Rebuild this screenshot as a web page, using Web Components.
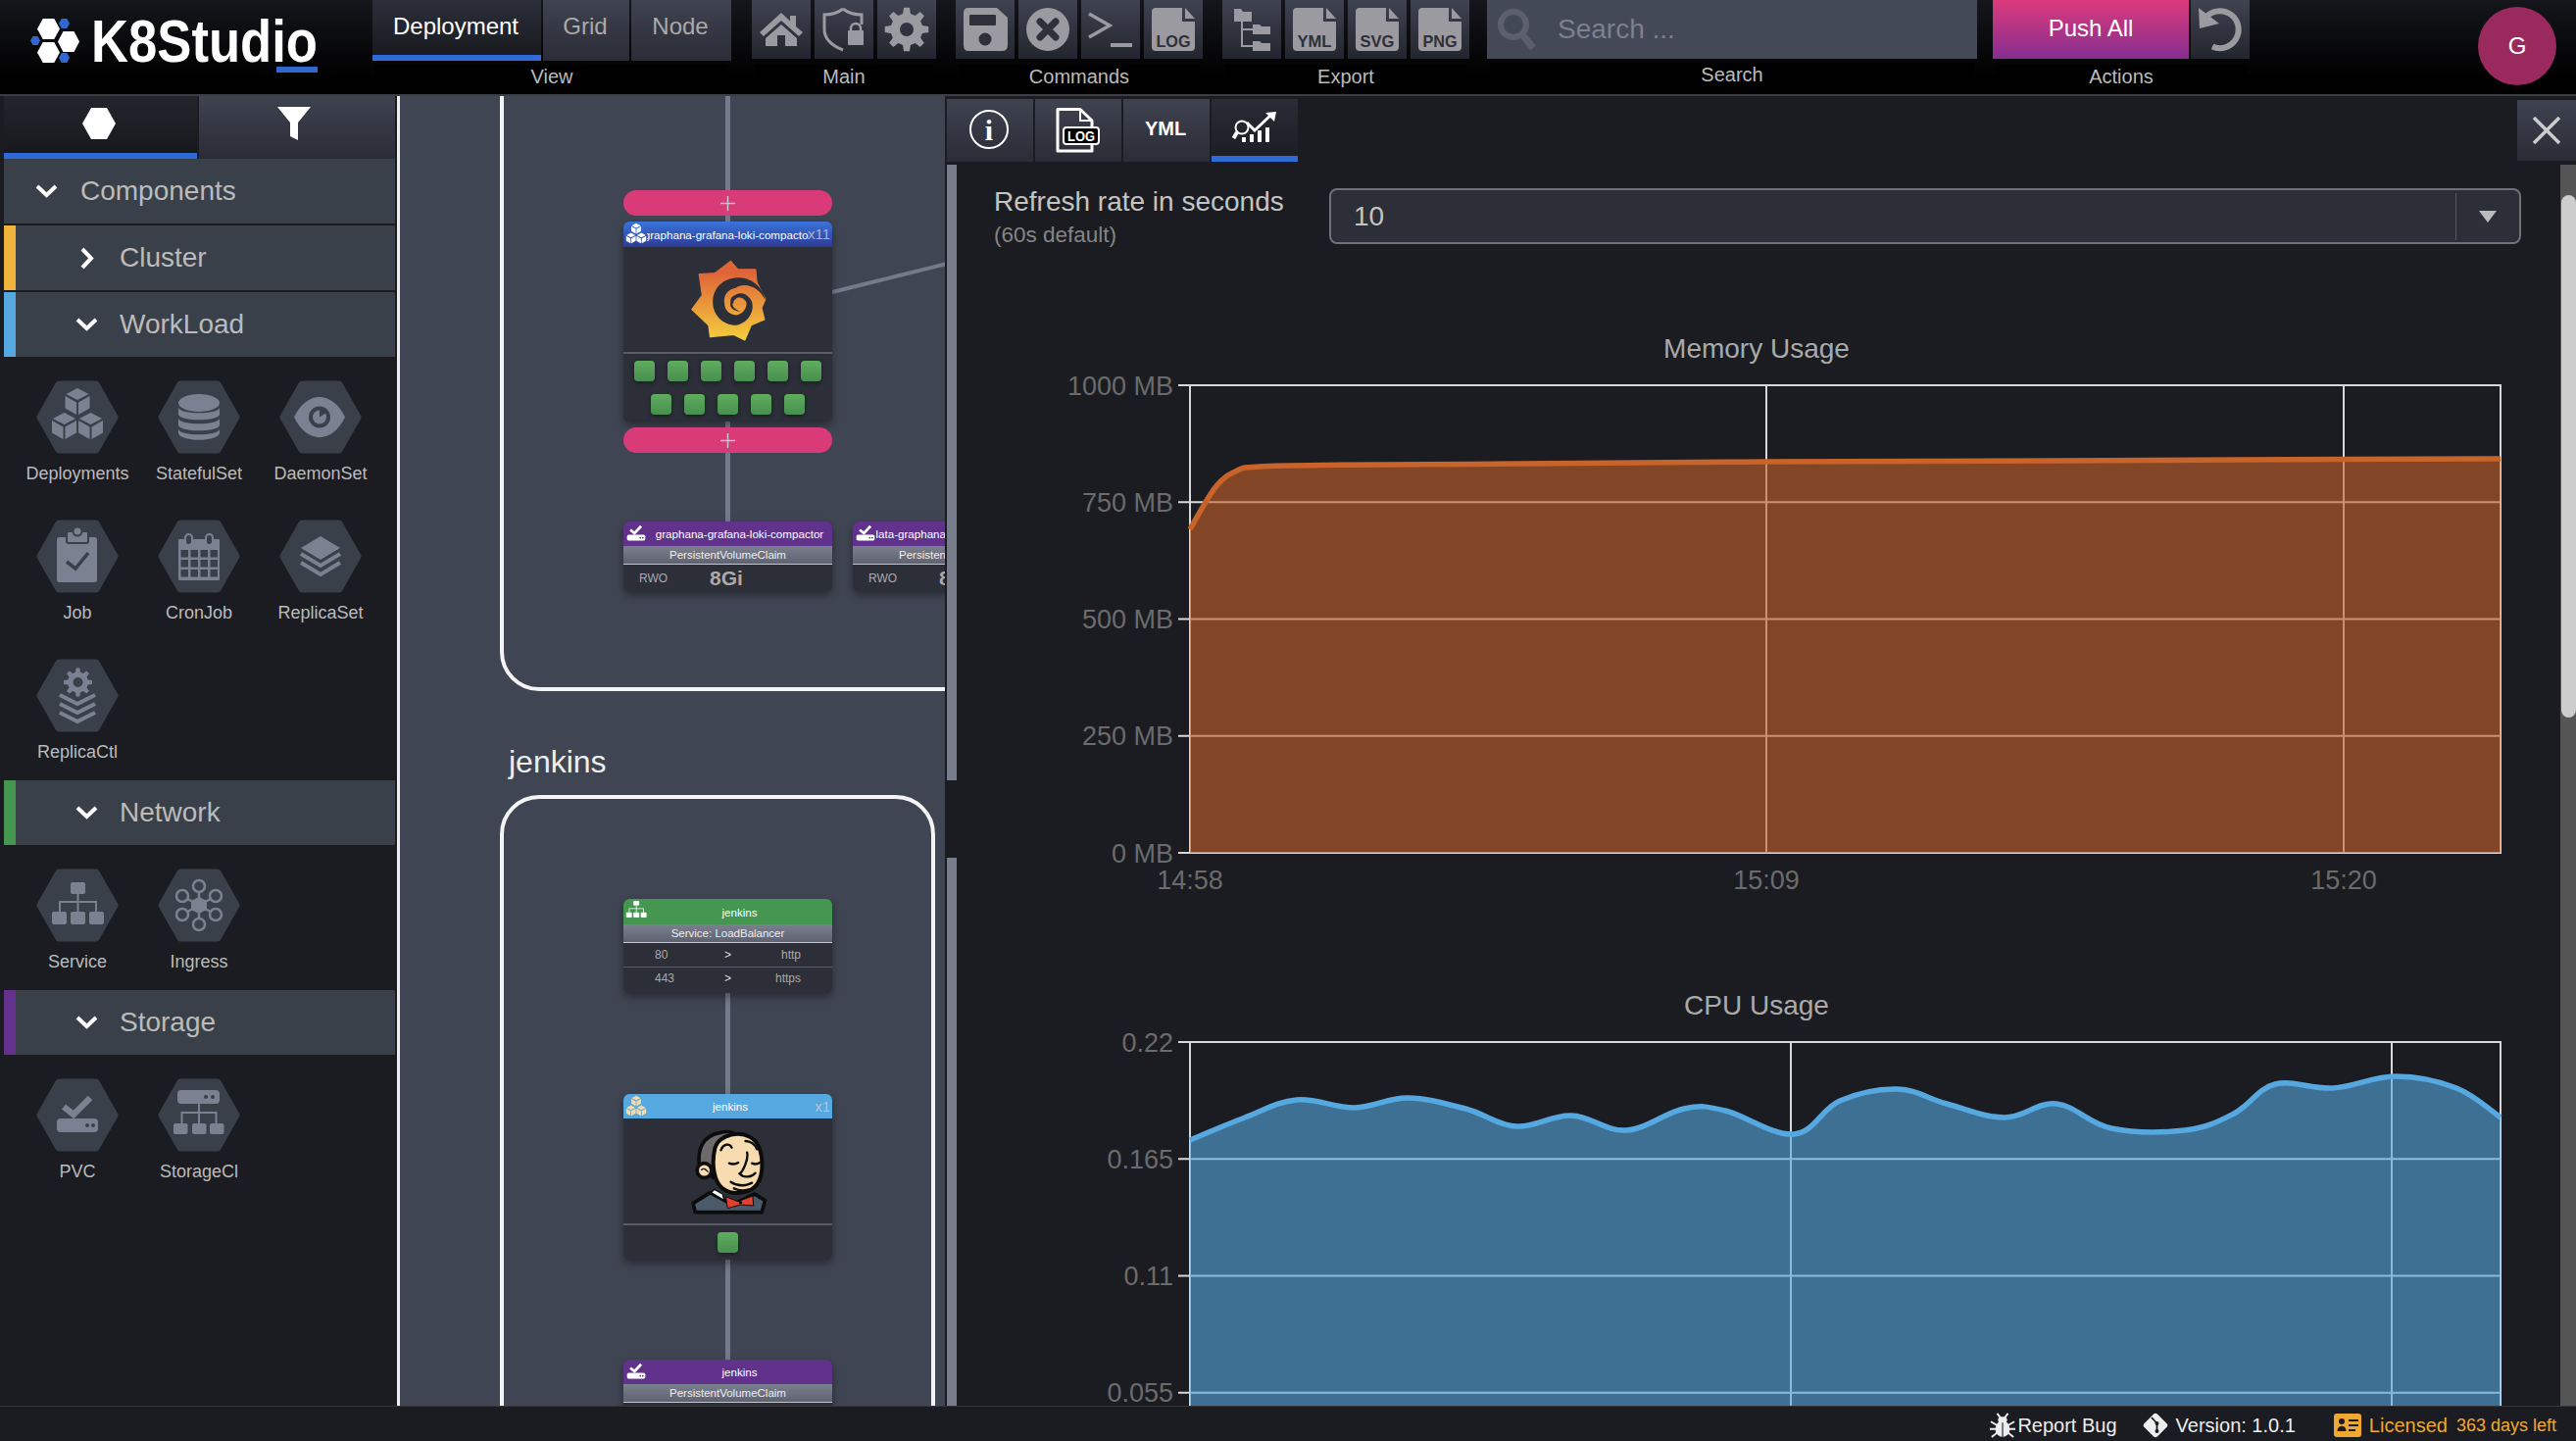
<!DOCTYPE html>
<html lang="en"><head><meta charset="utf-8"><title>K8Studio</title>
<style>
html,body{margin:0;padding:0;width:2628px;height:1470px;overflow:hidden;background:#0c0d10;font-family:"Liberation Sans",Arial,sans-serif}
body{display:flex;flex-direction:column}
</style></head>
<body>
<k8-topbar>
  <k8-logo></k8-logo>
  <k8-group label="View" gap="2" ml="0">
    <k8-tab w="172" active>Deployment</k8-tab><k8-tab w="88">Grid</k8-tab><k8-tab w="102">Node</k8-tab>
  </k8-group>
  <k8-group label="Main" ml="21">
    <k8-tbtn icon="home"></k8-tbtn><k8-tbtn icon="shield"></k8-tbtn><k8-tbtn icon="gear"></k8-tbtn>
  </k8-group>
  <k8-group label="Commands" ml="20">
    <k8-tbtn icon="save"></k8-tbtn><k8-tbtn icon="cancel"></k8-tbtn><k8-tbtn icon="term"></k8-tbtn><k8-tbtn icon="log"></k8-tbtn>
  </k8-group>
  <k8-group label="Export" ml="20">
    <k8-tbtn icon="tree"></k8-tbtn><k8-tbtn icon="yml"></k8-tbtn><k8-tbtn icon="svg"></k8-tbtn><k8-tbtn icon="png"></k8-tbtn>
  </k8-group>
  <k8-group label="Search" ml="18" lt="4"><k8-search></k8-search></k8-group>
  <k8-group label="Actions" ml="16"><k8-push>Push All</k8-push><k8-tbtn icon="undo" w="60" flat></k8-tbtn></k8-group>
  <k8-avatar>G</k8-avatar>
</k8-topbar>
<k8-workspace>
  <k8-sidebar>
    <k8-section title="Components" open top></k8-section>
    <k8-section title="Cluster" color="#f0b43c"></k8-section>
    <k8-section title="WorkLoad" color="#56a8e0" open>
      <k8-tile icon="deploy">Deployments</k8-tile><k8-tile icon="db">StatefulSet</k8-tile><k8-tile icon="eye">DaemonSet</k8-tile>
      <k8-tile icon="job">Job</k8-tile><k8-tile icon="cal">CronJob</k8-tile><k8-tile icon="stack">ReplicaSet</k8-tile>
      <k8-tile icon="rctl">ReplicaCtl</k8-tile>
    </k8-section>
    <k8-section title="Network" color="#459650" open>
      <k8-tile icon="svc">Service</k8-tile><k8-tile icon="ing">Ingress</k8-tile>
    </k8-section>
    <k8-section title="Storage" color="#64318c" open>
      <k8-tile icon="pvc">PVC</k8-tile><k8-tile icon="scl">StorageCl</k8-tile>
    </k8-section>
  </k8-sidebar>
  <k8-canvas>
    <k8-frame y="-100" b="705"></k8-frame>
    <k8-frame y="811" b="1700" r="954" label="jenkins"></k8-frame>
    <k8-wire y="96" b="194"></k8-wire><k8-wire y="220" b="226"></k8-wire><k8-wire y="430" b="436"></k8-wire>
    <k8-wire y="462" b="532"></k8-wire><k8-wire y="1013" b="1116"></k8-wire><k8-wire y="1285" b="1387"></k8-wire>
    <k8-link></k8-link>
    <k8-node x="636" y="40" sub-hidden></k8-node>
    <k8-pill y="194"></k8-pill>
    <k8-node x="636" y="226" hh="26" head="linear-gradient(#3a74dc,#2d3a94)" title="graphana-grafana-loki-compactor" icon="deploy" count="x11" rt="24">
      <k8-art name="grafana"></k8-art><k8-pods n="11"></k8-pods>
    </k8-node>
    <k8-pill y="436"></k8-pill>
    <k8-node x="636" y="532" hh="25" head="#60328c" title="graphana-grafana-loki-compactor" icon="pvc" sub="PersistentVolumeClaim"><k8-claim size="8Gi"></k8-claim></k8-node>
    <k8-node x="870" y="532" hh="25" head="#60328c" title="data-graphana-grafana-loki-compactor" icon="pvc" sub="PersistentVolumeClaim"><k8-claim size="8Gi"></k8-claim></k8-node>
    <k8-node x="636" y="917" hh="26" head="#459650" title="jenkins" icon="svc" sub="Service: LoadBalancer">
      <k8-port from="80" to="http"></k8-port><k8-port from="443" to="https" line></k8-port>
    </k8-node>
    <k8-node x="636" y="1116" hh="25" head="#56a8e0" title="jenkins" icon="deploy" tint="#f5d9a8" count="x1" rt="19">
      <k8-art name="jenkins"></k8-art><k8-pods n="1"></k8-pods>
    </k8-node>
    <k8-node x="636" y="1387" hh="25" head="#60328c" title="jenkins" icon="pvc" sub="PersistentVolumeClaim"><k8-claim size="8Gi"></k8-claim></k8-node>
  </k8-canvas>
  <k8-panel>
    <k8-field label="Refresh rate in seconds" hint="(60s default)" value="10"></k8-field>
    <k8-chart title="Memory Usage" color="#c8632a"
      labels="1000 MB|750 MB|500 MB|250 MB|0 MB" xlabels="14:58@1214|15:09@1802|15:20@2391" vlines="1802,2391"
      points="1214,540 1240,497 1262,480 1285,476 1350,474.5 1500,473.5 1802,471 2100,470 2391,468.5 2551,468"></k8-chart>
    <k8-chart title="CPU Usage" color="#56a8e0" offset="670"
      labels="0.22|0.165|0.11|0.055|" xlabels="" vlines="1827,2440"
      points="1214,1163 1270,1140 1323,1122 1382,1130 1436,1120 1495,1131 1547,1149 1603,1138 1659,1153 1718,1131 1760,1133 1830,1157 1877,1123 1936,1111 1986,1126 2045,1140 2098,1126 2154,1151 2229,1153 2279,1136 2321,1106 2380,1110 2444,1098 2506,1110 2551,1140"></k8-chart>
  </k8-panel>
</k8-workspace>
<k8-footer></k8-footer>

<script>
const HEX='#39404a', CUT='#2e303a';
function cube(cx,y,s){
  const P=(pts)=>`<polygon points="${pts.map(([a,b])=>(cx+a*s).toFixed(1)+','+(y+b*s).toFixed(1)).join(' ')}"/>`;
  return P([[0,0],[.46,.24],[0,.48],[-.46,.24]])+P([[-.5,.32],[-.04,.58],[-.04,1.08],[-.5,.82]])+P([[.5,.32],[.04,.58],[.04,1.08],[.5,.82]]);
}
function gear(cx,cy,R,r,n,h){
  let d='',st=Math.PI*2/n;
  for(let i=0;i<n;i++){const a=i*st-Math.PI/2;
    [[-.3,r],[-.17,R],[.17,R],[.3,r]].forEach(([k,q],j)=>{const x=cx+q*Math.cos(a+k*st),y=cy+q*Math.sin(a+k*st);d+=(i==0&&j==0?'M':'L')+x.toFixed(1)+' '+y.toFixed(1)});}
  d+=`Z M${cx-h} ${cy}a${h} ${h} 0 1 0 ${2*h} 0a${h} ${h} 0 1 0 ${-2*h} 0Z`;
  return `<path fill-rule="evenodd" d="${d}"/>`;
}
function doc(label){
  return `<path d="M8 12Q8 8 12 8H39V22H52V48Q52 52 48 52H12Q8 52 8 48Z"/><path d="M42 8L52 19H42Z"/>
  <text x="30" y="47.5" text-anchor="middle" textLength="35" lengthAdjust="spacingAndGlyphs" font-family="Liberation Sans" font-weight="700" font-size="17" fill="${CUT}">${label}</text>`;
}
function spiral(){
  const T=[[0,95,0],[.13,62,32],[.27,53,37],[.41,56,32],[.54,44,18],[.68,16,14],[.81,10,10],[.95,22,6],[1,33,0]];
  const at=(t,i)=>{for(let k=1;k<T.length;k++)if(t<=T[k][0]){const f=(t-T[k-1][0])/(T[k][0]-T[k-1][0]);return T[k-1][i]+(T[k][i]-T[k-1][i])*f}return T[T.length-1][i]};
  const out=[],inn=[];
  for(let s=0;s<=120;s++){const t=s/120,a=(-4-659*t)*Math.PI/180,rc=at(t,1),w=at(t,2)/2;
    out.push([450+(rc+w)*Math.cos(a),408+(rc+w)*Math.sin(a)]);inn.push([450+(rc-w)*Math.cos(a),408+(rc-w)*Math.sin(a)]);}
  return out.concat(inn.reverse()).map(p=>p[0].toFixed(1)+','+p[1].toFixed(1)).join(' ');
}
const chev=(y)=>`<polyline points="24,${y} 42,${y+9} 60,${y}" fill="none" stroke="currentColor" stroke-width="4"/>`;
const bars=(ys,x=[16,35,54],w=15,h=13)=>x.map(a=>`<rect x="${a}" y="${ys}" width="${w}" height="${h}" rx="2"/>`).join('');
const ICONS={
 deploy:['14 6 56 56',cube(42,8,25)+cube(28.5,33,25)+cube(55.5,33,25)],
 pvc:['16 14 52 44',`<polyline points="28,29 38,37 54,20" fill="none" stroke="currentColor" stroke-width="6.5"/><rect x="20" y="41" width="44" height="14" rx="4"/><circle cx="52" cy="48" r="2" fill="var(--cut,${HEX})"/><circle cx="58" cy="48" r="2" fill="var(--cut,${HEX})"/>`],
 svc:['14 12 56 47',`<rect x="35" y="14" width="15" height="12" rx="2"/><path d="M41.5 26h2v7h18.500v11h-2v-9h-16.500v9h-2v-9h-16.500v9h-2v-11h18.500z"/>`+bars(44)],
 home:['0 0 60 60',`<path d="M30 13L8 33l4 4 18-16 18 16 4-4-7-6V16h-6v5.500z"/><path d="M14 39l16-14 16 14v8H34V36h-8v11H14z"/>`],
 shield:['0 0 60 60',`<path d="M29 9c-5 4-13 6-19 6v15c0 10 9 17 19 21M29 9c5 4 13 6 19 6v10" fill="none" stroke="currentColor" stroke-width="3"/><rect x="34" y="31" width="16" height="15" rx="1"/><path d="M37 31v-2a5 5 0 0 1 10 0v2" fill="none" stroke="currentColor" stroke-width="2.500"/>`],
 gear:['0 0 60 60',gear(30,30,22.500,16.500,8,7)],
 save:['0 0 60 60',`<path d="M13 8H42L53 18V46Q53 52 47 52H13Q8 52 8 46V13Q8 8 13 8Z"/><rect x="14" y="15" width="27" height="11" rx="1" fill="${CUT}"/><circle cx="30" cy="40" r="6.500" fill="${CUT}"/>`],
 cancel:['0 0 60 60',`<circle cx="30" cy="30" r="22"/><path d="M22 22L38 38M38 22L22 38" stroke="${CUT}" stroke-width="7" stroke-linecap="round"/>`],
 term:['0 0 60 60',`<polyline points="8,14 29,26 8,38" fill="none" stroke="currentColor" stroke-width="3.500"/><rect x="30" y="44" width="22" height="4"/>`],
 log:['0 0 60 60',doc('LOG')],yml:['0 0 60 60',doc('YML')],svg:['0 0 60 60',doc('SVG')],png:['0 0 60 60',doc('PNG')],
 tree:['0 0 60 60',`<path d="M12 9h7l2 3h9v10H12zM31 25h7l2 2h9v8H31zM31 42h7l2 2h9v8H31z"/><path d="M20 22v25h11M20 30h11" fill="none" stroke="currentColor" stroke-width="2"/>`],
 undo:['0 0 60 60',`<path d="M17 16A19 19 0 1 1 22 47.500" fill="none" stroke="currentColor" stroke-width="6"/><path d="M8 8L9 29L29 24Z"/>`],
 search:['0 0 60 60',`<circle cx="27" cy="25" r="13" fill="none" stroke="currentColor" stroke-width="6"/><path d="M36 35L47 49" stroke="currentColor" stroke-width="7"/>`],
 hexa:['0 0 34 32','<polygon points="0,16 9,0 25,0 34,16 25,32 9,32"/>'],
 funnel:['0 0 34 34','<polygon points="0,0 34,0 21,16 21,34 13,30 13,16"/>'],
 chevd:['0 0 23 14','<polyline points="2,2 11.500,11 21,2" fill="none" stroke="currentColor" stroke-width="4"/>'],
 chevr:['0 0 14 23','<polyline points="2,2 11,11.500 2,21" fill="none" stroke="currentColor" stroke-width="4"/>'],
 info:['0 0 44 44',`<circle cx="22" cy="22" r="19" fill="none" stroke="currentColor" stroke-width="2"/><text x="22" y="33" text-anchor="middle" font-family="Liberation Serif" font-size="30">i</text>`],
 logtab:['0 0 46 48',`<path d="M3 3.500H26L38 15V46H3z" fill="none" stroke="currentColor" stroke-width="3" stroke-linejoin="round"/><path d="M26 3V15H38" fill="none" stroke="currentColor" stroke-width="2"/><rect x="9" y="22" width="36" height="17" rx="3" fill="#000" stroke="#fff" stroke-width="2"/><text x="27" y="35.500" text-anchor="middle" textLength="28" lengthAdjust="spacingAndGlyphs" font-family="Liberation Sans" font-weight="700" font-size="14">LOG</text>`],
 chart:['0 0 46 32',`<circle cx="10" cy="16" r="6.500" fill="none" stroke="currentColor" stroke-width="2"/><path d="M5 21L1.500 27" stroke="currentColor" stroke-width="4"/><rect x="10" y="26" width="4" height="5"/><rect x="18" y="23" width="4" height="8"/><rect x="26" y="19" width="4" height="12"/><rect x="34" y="16" width="4" height="15"/><polyline points="15,11 23,19 40,3" fill="none" stroke="currentColor" stroke-width="3"/><polygon points="34,1 45,0 43,10"/>`],
 plus:['0 0 16 16','<path d="M8 0V16M0 8H16" stroke="currentColor" stroke-width="1.600"/>'],
 bug:['0 0 28 28',`<ellipse cx="14" cy="18" rx="8" ry="9"/><ellipse cx="14" cy="8" rx="5" ry="3.500"/><path d="M8 1l4 5M20 1l-4 5M1 10l7 4M27 10l-7 4M0 18h7M28 18h-7M2 27l6-5M26 27l-6-5" stroke="currentColor" stroke-width="2"/><path d="M14 11V27" stroke="#1a1c21" stroke-width="1.200"/>`],
 git:['0 0 28 28',`<rect x="4.500" y="4.500" width="19" height="19" rx="3" transform="rotate(45 14 14)"/><path d="M10 6L15.500 12V21" stroke="#1a1c21" stroke-width="1.800" fill="none"/><circle cx="15.500" cy="12" r="2" fill="#1a1c21"/><circle cx="15.500" cy="20" r="2" fill="#1a1c21"/>`],
 lic:['0 0 28 26',`<rect y="1" width="28" height="24" rx="3"/><circle cx="8" cy="9" r="3" fill="#1a1c21"/><path d="M3.500 19c0-7 9-7 9 0z" fill="#1a1c21"/><path d="M15 8h10M15 13h10M15 18h7" stroke="#1a1c21" stroke-width="2"/>`],
 grafana:['300 265 255 270',`<defs><linearGradient id="gf" x1="0" y1="0" x2="0" y2="1"><stop offset=".15" stop-color="#df6539"/><stop offset="1" stop-color="#f5cf3c"/></linearGradient></defs>
  <polygon fill="url(#gf)" stroke="url(#gf)" stroke-width="4" stroke-linejoin="round" points="435,277 458,303 514,303 518,345 545,398 533,425 542,462 500,480 480,527 445,510 370,517 365,480 312,430 345,385 335,318 385,315"/>
  <polygon fill="#2c2e38" points="${spiral()}"/>`],
 jenkins:['305 148 245 270',`
  <path d="M320 380L372 348 440 385 508 352 540 372 530 408H326Z" fill="#4a5a68" stroke="#0c0c0c" stroke-width="11" stroke-linejoin="round"/>
  <path d="M375 348L415 372 410 352 385 338Z" fill="#fff" stroke="#0c0c0c" stroke-width="4"/>
  <path d="M340 270C330 215 350 175 400 165C440 155 460 170 440 190C400 215 395 270 380 300Z" fill="#6c6a6a" stroke="#0c0c0c" stroke-width="11"/>
  <circle cx="354" cy="280" r="22" fill="#f6dcb0" stroke="#0c0c0c" stroke-width="11"/>
  <path d="M386 215C395 170 470 150 510 190C538 225 535 290 518 318C498 352 440 358 410 335C385 315 375 265 386 215Z" fill="#f6dcb0" stroke="#0c0c0c" stroke-width="12"/>
  <path d="M405 218C412 197 432 197 438 210M480 190C495 190 510 200 515 215" fill="none" stroke="#0c0c0c" stroke-width="7" stroke-linecap="round"/>
  <path d="M430 258Q445 264 458 256M500 258Q512 264 524 256M485 225C490 250 470 285 462 290C475 305 500 300 510 288" fill="none" stroke="#0c0c0c" stroke-width="7" stroke-linecap="round"/>
  <path d="M435 315C455 328 480 328 500 318M445 335Q465 345 490 338" fill="none" stroke="#0c0c0c" stroke-width="7" stroke-linecap="round"/>
  <path d="M366 285Q352 268 344 280" fill="none" stroke="#0c0c0c" stroke-width="4"/>
  <path d="M420 360L457 375 502 358 505 388 465 385 425 396Z" fill="#e0402e" stroke="#0c0c0c" stroke-width="3"/>
  <circle cx="465" cy="378" r="5" fill="#0c0c0c"/>`],
 tdeploy:['0 0 84 75',cube(42,8,25)+cube(28.5,33,25)+cube(55.5,33,25)],
 tdb:['0 0 84 75',`<ellipse cx="42" cy="23" rx="21" ry="9"/><path d="M21 28c2 7 40 7 42 0v7c-2 7-40 7-42 0zM21 39c2 7 40 7 42 0v7c-2 7-40 7-42 0zM21 50c2 7 40 7 42 0v4c-2 9-40 9-42 0z"/>`],
 teye:['0 0 84 75',`<path d="M15 37.500C28 10 54 10 67 37.500C54 65 28 65 15 37.500Z"/><circle cx="41" cy="37.500" r="11" fill="${HEX}"/><circle cx="41" cy="37.500" r="7"/><path d="M41 37.500V29A9 9 0 0 1 48 33Z" fill="${HEX}"/>`],
 tjob:['0 0 84 75',`<rect x="21" y="18" width="41" height="46" rx="2.500"/><rect x="31" y="12" width="22" height="12" rx="2" stroke="${HEX}" stroke-width="2"/><circle cx="42" cy="12" r="4.500" stroke="${HEX}" stroke-width="2"/><polyline points="31,43 40,50 53,34" fill="none" stroke="${HEX}" stroke-width="3.500"/>`],
 tcal:['0 0 84 75',`<rect x="21" y="20" width="42" height="42" rx="1"/>`+[0,1,2].map(j=>[0,1,2,3].map(i=>`<rect x="${23.500+i*10}" y="${31+j*10}" width="7.500" height="7.500" fill="${HEX}"/>`).join('')).join('')+`<rect x="28" y="15" width="7" height="11" rx="3.500" fill="${HEX}" stroke="currentColor" stroke-width="2"/><rect x="49" y="15" width="7" height="11" rx="3.500" fill="${HEX}" stroke="currentColor" stroke-width="2"/>`],
 tstack:['0 0 84 75',`<polygon points="42,17 62,29 42,41 22,29"/><polyline points="22,35 42,47 62,35" fill="none" stroke="currentColor" stroke-width="4"/><polyline points="22,44 42,56 62,44" fill="none" stroke="currentColor" stroke-width="4"/>`],
 trctl:['0 0 84 75',gear(42.500,24,14.500,10.500,8,5)+chev(37)+chev(46)+chev(55)],
 tsvc:['0 0 84 75',`<rect x="35" y="14" width="15" height="12" rx="2"/><path d="M41.500 26h2v7h18.500v11h-2v-9h-16.500v9h-2v-9h-16.500v9h-2v-11h18.500z"/>`+bars(44)],
 ting:['0 0 84 75',[[42,18],[42,57],[25,28],[59,28],[25,47],[59,47]].map(([x,y])=>`<line x1="42" y1="37.500" x2="${x}" y2="${y}" stroke="currentColor" stroke-width="2.500"/><circle cx="${x}" cy="${y}" r="6" fill="${HEX}" stroke="currentColor" stroke-width="2.500"/>`).join('')+'<polygon points="42,29 50,33 50,42 42,46 34,42 34,33"/>'],
 tpvc:['0 0 84 75',`<polyline points="28,29 38,37 55,20" fill="none" stroke="currentColor" stroke-width="6.500"/><rect x="21" y="41" width="42" height="14" rx="4"/><circle cx="52" cy="48" r="2" fill="${HEX}"/><circle cx="58" cy="48" r="2" fill="${HEX}"/>`],
 tscl:['0 0 84 75',`<rect x="20" y="12" width="43" height="14" rx="4"/><circle cx="49" cy="19" r="2" fill="${HEX}"/><circle cx="56" cy="19" r="2" fill="${HEX}"/><path d="M41 26h2v8h17.500v12h-2v-10h-15.500v10h-2v-10h-15.500v10h-2v-12h17.500z"/>`+bars(46,[16,35,53],14.500,11)]
};
class Base extends HTMLElement{
  connectedCallback(){ if(this.shadowRoot) return; this.attachShadow({mode:'open'}).innerHTML=`<style>${this.css()}</style>`+this.html(); }
  css(){return ':host{display:block}'} html(){return '<slot></slot>'}
  a(n,d=''){return this.hasAttribute(n)?this.getAttribute(n):d}
}
const def=(n,c)=>customElements.define(n,c);
def('k8-icon',class extends Base{
  css(){return `:host{display:inline-flex}svg{display:block;fill:currentColor;overflow:visible}`}
  html(){const [vb,b]=ICONS[this.a('name')];return `<svg viewBox="${vb}" width="${this.a('w',60)}" height="${this.a('h',60)}">${b}</svg>`}
});
def('k8-topbar',class extends Base{
  css(){return `:host{display:flex;flex:none;height:96px;background:linear-gradient(#15161b,#000 85%);border-bottom:2px solid #3c3e43;color:#bbb}`}
});
def('k8-logo',class extends Base{
  css(){return `:host{display:block;flex:none;width:380px;height:96px}svg{display:block}`}
  html(){const h=(x,y,w,ht,f)=>`<polygon fill="${f}" points="${x},${y+ht/2} ${x+w*.25},${y} ${x+w*.75},${y} ${x+w},${y+ht/2} ${x+w*.75},${y+ht} ${x+w*.25},${y+ht}"/>`;
    return `<svg width="380" height="96">${h(38,19,23,21,'#fff')}${h(38,43,23,21,'#fff')}${h(59,32,22,21,'#fff')}${h(60,19,11,10,'#3068d0')}${h(31,37,10,9,'#3068d0')}${h(60,54,11,10,'#3068d0')}
    <text x="93" y="63" fill="#fff" font-family="Liberation Sans" font-weight="700" font-size="62" textLength="231" lengthAdjust="spacingAndGlyphs">K8Studio</text><rect x="282" y="68" width="42" height="6" fill="#3068d0"/></svg>`}
});
def('k8-group',class extends Base{
  css(){return `:host{display:flex;flex:none;flex-direction:column;margin-left:${this.a('ml',0)}px}
   .r{display:flex;gap:${this.a('gap',4)}px;height:${this.a('label')=='View'?62:60}px}
   .l{margin:${this.a('lt',this.a('label')=='View'?4:6)}px 3px 0;height:24px;line-height:24px;background:#000;text-align:center;font-size:20px;color:#bbb}`}
  html(){return `<div class="r"><slot></slot></div><div class="l">${this.a('label')}</div>`}
});
def('k8-tab',class extends Base{
  css(){const on=this.hasAttribute('active');return `:host{display:flex;box-sizing:border-box;align-items:center;justify-content:center;width:${this.a('w')}px;height:62px;padding:0 2px ${on?2:8}px 0;font-size:24px;
   background:${on?'linear-gradient(#2c2f3a,#181a1f)':'linear-gradient(#3f4350,#2a2c36)'};color:${on?'#fff':'#aaa'};border-bottom:${on?'6px solid #2f6bd8':'0'}}`}
});
def('k8-tbtn',class extends Base{
  css(){return `:host{display:block;width:60px;height:60px;background:linear-gradient(#3f4350,#23252e);color:#9a9aa0}`}
  html(){return `<k8-icon name="${this.a('icon')}"></k8-icon>`}
});
def('k8-search',class extends Base{
  css(){return `:host{display:flex;align-items:center;width:500px;height:60px;background:#434956;color:#5b606c}span{font-size:28px;color:#7c8090;margin-left:12px}`}
  html(){return `<k8-icon name="search"></k8-icon><span>Search ...</span>`}
});
def('k8-push',class extends Base{
  css(){return `:host{display:flex;align-items:center;justify-content:center;width:200px;height:58px;margin-right:-2px;padding-bottom:2px;box-sizing:content-box;font-size:24px;color:#fff;background:linear-gradient(#dc3a7c,#852e90)}`}
});
def('k8-avatar',class extends Base{
  css(){return `:host{display:flex;flex:none;align-items:center;justify-content:center;width:80px;height:80px;margin:7px 20px 0 auto;border-radius:50%;background:#9a2a5e;color:#fff;font-size:24px}`}
});
def('k8-workspace',class extends Base{
  css(){return `:host{display:flex;flex:none;height:1336px}`}
});
def('k8-sidebar',class extends Base{
  css(){return `:host{display:flex;flex:none;flex-direction:column;box-sizing:border-box;width:405px;padding:0 2px 0 4px;background:#1a1c21;overflow:hidden}
   .t{display:flex;gap:2px;height:64px}.t div{flex:1;display:flex;align-items:center;justify-content:center;color:#fff;background:linear-gradient(#3f4350,#2a2c36);padding:0 6px 8px 0}
   .t .on{background:linear-gradient(#24262e,#16181c);border-bottom:6px solid #2f6bd8;padding:0 3px 2px 0}`}
  html(){return `<div class="t"><div class="on"><k8-icon name="hexa" w="34" h="32"></k8-icon></div><div><k8-icon name="funnel" w="34" h="34"></k8-icon></div></div><slot></slot>`}
});
def('k8-section',class extends Base{
  css(){const c=this.a('color'),top=this.hasAttribute('top');return `:host{display:block}
   .h{display:flex;align-items:center;height:66px;margin-bottom:${this.children.length?'0':'2px'};background:#39404a;color:#bbb;font-size:28px}
   .b{width:12px;align-self:stretch;background:${c||'transparent'};flex:none}
   .c{display:flex;width:23px;justify-content:center;margin:0 ${top?23:22}px 0 ${top?20:61}px;color:#fff}
   .g{display:grid;grid-template-columns:repeat(3,124px);row-gap:35px;padding:24px 0 17px 33px}`}
  html(){const o=this.hasAttribute('open');return `<div class="h"><div class="b"></div><div class="c"><k8-icon name="${o?'chevd':'chevr'}" w="${o?23:14}" h="${o?14:23}"></k8-icon></div>${this.a('title')}</div>${this.children.length?'<div class="g"><slot></slot></div>':''}`}
});
def('k8-tile',class extends Base{
  css(){return `:host{display:flex;flex-direction:column;align-items:center;width:84px;color:#bbb;font-size:18px;white-space:nowrap}
   svg{display:block}.l{margin-top:8px;line-height:24px}k8-icon{color:#7b8190;position:absolute}.w{position:relative;width:84px;height:75px}`}
  html(){return `<div class="w"><svg width="84" height="75"><polygon fill="${HEX}" stroke="${HEX}" stroke-width="7" stroke-linejoin="round" points="4,37.500 23,4 61,4 80,37.500 61,71 23,71"/></svg><k8-icon style="top:0;left:0" name="t${this.a('icon')}" w="84" h="75"></k8-icon></div><div class="l"><slot></slot></div>`}
});
def('k8-canvas',class extends Base{
  css(){return `:host{display:block;flex:none;position:relative;box-sizing:border-box;width:559px;border-left:3px solid #eee;background:#3f4552;overflow:hidden}`}
});
const OX=408,OY=98;
def('k8-frame',class extends Base{
  css(){const r=+this.a('r',1400),y=+this.a('y'),b=+this.a('b');return `:host{display:block;position:absolute;box-sizing:border-box;left:${510-OX}px;top:${y-OY}px;width:${r-510}px;height:${b-y}px;border:4px solid #f4f4f4;border-radius:40px}
    .l{position:absolute;left:5px;top:-56px;font-size:32px;line-height:36px;color:#eee}`}
  html(){return this.a('label')?`<div class="l">${this.a('label')}</div>`:''}
});
def('k8-wire',class extends Base{
  css(){const y=+this.a('y'),b=+this.a('b');return `:host{display:block;position:absolute;left:${740-OX}px;top:${y-OY}px;width:5px;height:${b-y}px;background:#757a8a}`}
});
def('k8-link',class extends Base{
  css(){return `:host{display:block;position:absolute;left:0;top:0}svg{display:block}`}
  html(){return `<svg width="560" height="400"><line x1="${849-OX}" y1="${298-OY}" x2="${966-OX}" y2="${269-OY}" stroke="#757a8a" stroke-width="4"/></svg>`}
});
def('k8-pill',class extends Base{
  css(){return `:host{display:flex;align-items:center;justify-content:center;position:absolute;left:${636-OX}px;top:${+this.a('y')-OY}px;width:213px;height:26px;border-radius:13px;background:#d93a78;color:#c8c8cc}`}
  html(){return `<k8-icon name="plus" w="15" h="15"></k8-icon>`}
});
def('k8-node',class extends Base{
  css(){const tint=this.a('tint','#fff');return `:host{display:block;position:absolute;left:${+this.a('x')-OX}px;top:${+this.a('y')-OY}px;width:213px;${this.hasAttribute('sub-hidden')?'height:4px;':''}border-radius:6px;overflow:visible;background:#2c2e38;box-shadow:0 4px 9px rgba(0,0,0,.38)}
   .h{position:relative;display:flex;align-items:center;height:${this.a('hh',26)}px;background:${this.a('head')};border-radius:6px 6px 0 0;color:#fff;font-size:11.6px;overflow:hidden}
   .i{position:absolute;left:2px;top:1px;color:${tint};z-index:1}
   .t{display:flex;justify-content:center;white-space:nowrap;overflow:hidden;margin-left:24px;flex:1;margin-right:${this.a('rt',0)}px}.t span{flex:none}
   .n{position:absolute;right:2px;top:4px;font-size:15px;color:rgba(205,205,210,.8);line-height:18px}
   .s{height:18px;line-height:18px;text-align:center;font-size:11.5px;color:#eee;background:linear-gradient(#7b808e,#5e6271);border-bottom:1px solid #c4c6cc}`}
  html(){if(this.hasAttribute('sub-hidden'))return '';const ic=this.a('icon');
    return `<div class="h"><div class="i"><k8-icon name="${ic}" w="22" h="${ic=='deploy'?22:ic=='pvc'?21:19}"></k8-icon></div><div class="t"><span>${this.a('title')}</span></div>${this.a('count')?`<div class="n">${this.a('count')}</div>`:''}</div>${this.a('sub')?`<div class="s">${this.a('sub')}</div>`:''}<slot></slot>`}
});
def('k8-art',class extends Base{
  css(){return `:host{display:flex;align-items:center;justify-content:center;height:107px;border-bottom:2px solid #595b68}`}
  html(){return `<k8-icon name="${this.a('name')}" w="82" h="90"></k8-icon>`}
});
def('k8-pods',class extends Base{
  css(){return `:host{display:flex;flex-wrap:wrap;justify-content:center;gap:13px;padding:7px 11px 7px}i{display:block;width:21px;height:21px;border-radius:4px;background:linear-gradient(#60ad5e,#478f4e);box-shadow:0 2px 4px rgba(0,0,0,.35)}`}
  html(){return '<i></i>'.repeat(+this.a('n'))}
});
def('k8-claim',class extends Base{
  css(){return `:host{display:flex;align-items:center;height:27px;color:#aaa;font-size:12px;padding-left:16px}b{font-size:21px;margin-left:43px}`}
  html(){return `RWO<b>${this.a('size')}</b>`}
});
def('k8-port',class extends Base{
  css(){return `:host{display:grid;box-sizing:border-box;grid-template-columns:1fr 30px 1fr;align-items:center;height:24px;font-size:12px;color:#aaa;${this.hasAttribute('line')?'border-top:1px solid #595b68;height:27px;padding-bottom:5px;':''}}
   .a{padding-left:32px}.m{text-align:center;color:#ddd}.b{text-align:right;padding-right:32px}`}
  html(){return `<div class="a">${this.a('from')}</div><div class="m">&gt;</div><div class="b">${this.a('to')}</div>`}
});
def('k8-panel',class extends Base{
  css(){return `:host{display:flex;flex:none;flex-direction:column;position:relative;width:1664px;background:#1a1c21;overflow:hidden}
   .tabs{display:flex;gap:2px;flex:none;height:64px;padding:3px 0 3px 2px}
   .tb{display:flex;align-items:center;justify-content:center;width:88px;height:64px;padding:0 2px 3px 0;background:linear-gradient(#3f4350,#2a2c36);color:#fff;font-size:20px;font-weight:700;box-sizing:border-box}
   .tb.on{background:linear-gradient(#2a2c36,#1c1e24);border-bottom:6px solid #2f6bd8;padding:0}
   .x{margin-left:auto;width:60px;height:62px;margin-top:1px;margin-right:0;display:flex;align-items:center;justify-content:center;background:linear-gradient(#3f4350,#2a2c36)}
   .body{flex:1;display:flex;min-height:0}
   .gut{flex:none;display:flex;flex-direction:column;gap:79px;width:10px;margin-left:2px}.gut i{display:block;background:#787d8c}.gut i:first-child{height:628px}.gut i:last-child{flex:1}
   .main{flex:1;min-width:0}
   .sb{flex:none;position:relative;width:16px;background:#555}.sb i{position:absolute;left:1px;right:0;top:31px;height:533px;border-radius:8px;background:#cdcdcd;display:block}`}
  html(){return `<div class="tabs"><div class="tb"><k8-icon name="info" w="44" h="44"></k8-icon></div><div class="tb"><k8-icon name="logtab" w="46" h="48"></k8-icon></div><div class="tb">YML</div><div class="tb on"><k8-icon name="chart" w="46" h="32"></k8-icon></div>
   <div class="x"><svg width="30" height="28"><path d="M2 1L28 27M28 1L2 27" stroke="#ccc" stroke-width="3.500"/></svg></div></div>
   <div class="body"><div class="gut"><i></i><i></i></div><div class="main"><slot></slot></div><div class="sb"><i></i></div></div>`}
});
def('k8-field',class extends Base{
  css(){return `:host{display:flex;padding:24px 40px 0 38px;height:57px}
   .l{flex:none;width:342px;margin-top:-2px;color:#c4c4c4;font-size:28px;line-height:32px}.h{margin-top:5px;font-size:22.500px;line-height:26px;color:#858585}
   .d{flex:1;display:flex;align-items:center;box-sizing:border-box;height:57px;border:2px solid #6f7178;border-radius:8px;background:#2c2e38;color:#c4c4c4;font-size:28px;padding-left:23px}
   .v{flex:1}.a{display:flex;align-items:center;justify-content:center;width:64px;height:48px;border-left:1px solid #55575f}
   .a i{display:block;border:9px solid transparent;border-top:12px solid #bbb;border-bottom:0}`}
  html(){return `<div class="l">${this.a('label')}<div class="h">${this.a('hint')}</div></div><div class="d"><div class="v">${this.a('value')}</div><div class="a"><i></i></div></div>`}
});
function smooth(p){let d=`M${p[0][0]} ${p[0][1]}`;
  for(let i=0;i<p.length-1;i++){const a=p[Math.max(i-1,0)],b=p[i],c=p[i+1],e=p[Math.min(i+2,p.length-1)],k=.18;
    d+=`C${(b[0]+(c[0]-a[0])*k).toFixed(1)} ${(b[1]+(c[1]-a[1])*k).toFixed(1)} ${(c[0]-(e[0]-b[0])*k).toFixed(1)} ${(c[1]-(e[1]-b[1])*k).toFixed(1)} ${c[0]} ${c[1]}`}
  return d}
def('k8-chart',class extends Base{
  css(){return `:host{display:block;height:670px;margin-top:${this.a('offset')?0:51}px}svg{display:block;overflow:hidden}text{font-family:"Liberation Sans",Arial,sans-serif}`}
  html(){
    const off=+this.a('offset',0),oy=300+off,ox=976,L=1214,R=2551,T=393+off,B=870+off,st=(B-T)/4,col=this.a('color');
    const X=x=>x-ox,Y=y=>y-oy;
    const pts=this.a('points').split(' ').map(s=>s.split(',').map(Number));
    const line=smooth(pts.map(([x,y])=>[X(x),Y(y)]));
    let g='';
    this.a('labels').split('|').forEach((t,i)=>{const y=Y(T+st*i);
      g+=`<line x1="${X(L-12)}" x2="${X(R)}" y1="${y}" y2="${y}" stroke="#d8d8d8" stroke-width="2"/>`;
      if(t) g+=`<text x="${X(L-17)}" y="${y+9.500}" text-anchor="end" font-size="27" fill="#6b6b6b">${t}</text>`;});
    this.a('vlines').split(',').forEach(v=>{g+=`<line x1="${X(+v)}" x2="${X(+v)}" y1="${Y(T)}" y2="${Y(B)}" stroke="#d8d8d8" stroke-width="2"/>`});
    const xl=this.a('xlabels');
    if(xl) xl.split('|').forEach(s=>{const [t,x]=s.split('@');g+=`<text x="${X(+x)}" y="${Y(B)+37}" text-anchor="middle" font-size="27" fill="#6b6b6b">${t}</text>`});
    const area=line+`L${X(R)} ${Y(B)}L${X(L)} ${Y(B)}Z`;
    return `<svg width="1636" height="670"><text x="${1792-ox}" y="${55+10}" text-anchor="middle" font-size="28" fill="#aaa">${this.a('title')}</text>
     ${g}<rect x="${X(L)}" y="${Y(T)}" width="${R-L}" height="${B-T}" fill="none" stroke="#d8d8d8" stroke-width="2"/>
     <path d="${area}" fill="${col}" fill-opacity=".6"/><path d="${line}" fill="none" stroke="${col}" stroke-width="5.5"/></svg>`}
});
def('k8-footer',class extends Base{
  css(){return `:host{display:flex;flex:none;box-sizing:border-box;height:36px;align-items:center;justify-content:flex-end;padding:3px 20px 0 0;background:#1a1c21;border-top:1px solid #34363c;color:#eee;font-size:20px;white-space:nowrap}
   .m{margin-left:2px}.g1{margin-left:25px}.g2{margin-left:7px}.g3{margin-left:39px;color:#f0a830}.g4{margin-left:8px;font-size:20px;color:#f0a830}.g5{margin-left:9px;font-size:18px;color:#f0a830}`}
  html(){return `<k8-icon name="bug" w="26" h="26"></k8-icon><span class="m">Report Bug</span><k8-icon class="g1" name="git" w="28" h="28"></k8-icon><span class="g2">Version: 1.0.1</span><k8-icon class="g3" name="lic" w="28" h="26"></k8-icon><span class="g4">Licensed</span><span class="g5">363 days left</span>`}
});
</script>
</body></html>
